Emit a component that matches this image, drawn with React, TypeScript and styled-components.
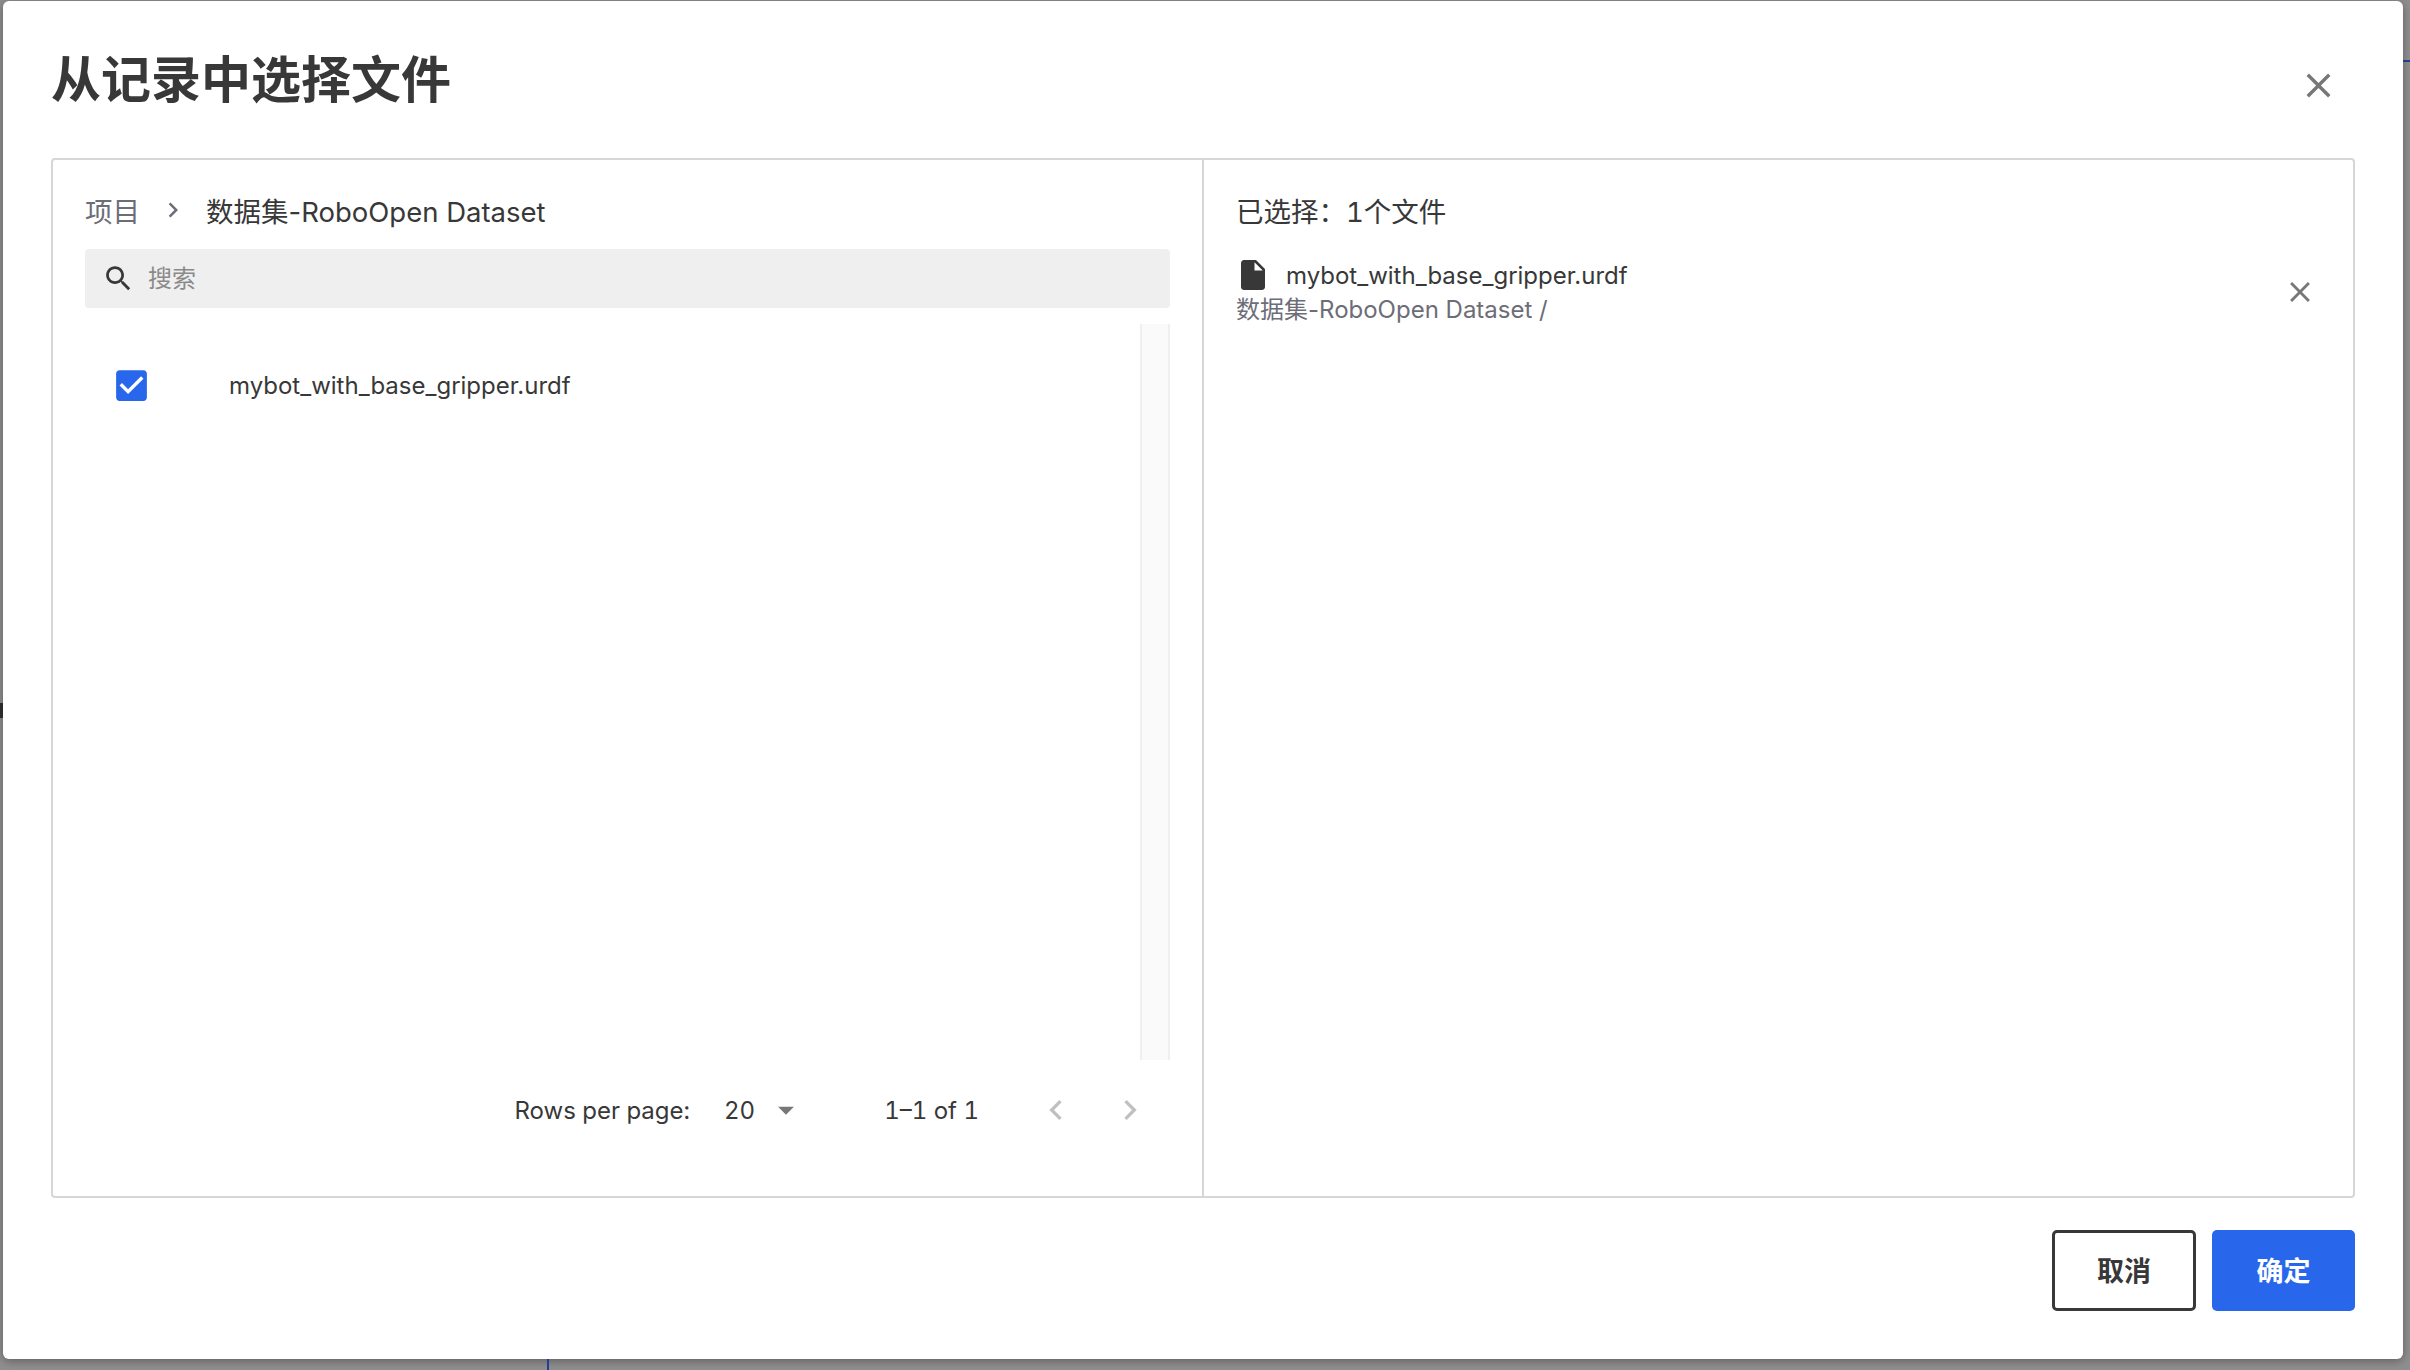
import React from "react";
import styled, { createGlobalStyle } from "styled-components";

const GlobalStyle = createGlobalStyle`
  html, body {
    margin: 0;
    padding: 0;
    background: #8f8f8f;
  }
  body {
    font-family: Inter, "Noto Sans CJK SC", sans-serif;
    color: #383838;
  }
`;

const Backdrop = styled.div`
  position: relative;
  box-sizing: border-box;
  width: 2410px;
  height: 1370px;
  padding: 1px 7px 11px 3px;
  background: #8f8f8f;
  overflow: hidden;
`;
const BehindLine = styled.div`
  position: absolute;
  background: #1f3f94;
`;
const TopRightLine = styled(BehindLine)`
  right: 0;
  top: 60px;
  width: 7px;
  height: 2px;
`;
const BottomLine = styled(BehindLine)`
  left: 547px;
  bottom: 0;
  width: 2px;
  height: 11px;
`;
const LeftGlyph = styled.div`
  position: absolute;
  left: 0;
  top: 703px;
  width: 3px;
  height: 15px;
  background: #2a2a2a;
`;
const Modal = styled.div`
  display: flex;
  flex-direction: column;
  box-sizing: border-box;
  height: 1358px;
  padding: 0 48px;
  background: #fff;
  border-radius: 6px;
  box-shadow: 0 2px 10px rgba(0, 0, 0, 0.35);
`;
const Header = styled.div`
  display: flex;
  align-items: center;
  justify-content: space-between;
  height: 157px;
  flex-shrink: 0;
`;
const Title = styled.h1`
  margin: 0;
  font-size: 50px;
  font-weight: 700;
  line-height: 60px;
  color: #383838;
`;
const IconButton = styled.button<{ $size: number; $color?: string }>`
  display: flex;
  flex-shrink: 0;
  padding: 0;
  border: 0;
  background: none;
  color: ${props => props.$color || "#777"};
  cursor: pointer;
  svg {
    display: block;
    width: ${props => props.$size}px;
    height: ${props => props.$size}px;
    fill: currentColor;
  }
`;
const HeaderClose = styled(IconButton)`
  margin: 11px 16px 0 0;
`;
const Panel = styled.div`
  display: grid;
  grid-template-columns: 1149px 1fr;
  box-sizing: border-box;
  height: 1040px;
  flex-shrink: 0;
  border: 2px solid #d6d6d6;
  border-radius: 4px;
`;
const LeftPane = styled.div`
  display: flex;
  flex-direction: column;
  min-width: 0;
  padding: 35px 32px 0;
`;
const RightPane = styled.div`
  min-width: 0;
  padding: 35px 36px 0 32px;
  border-left: 2px solid #d6d6d6;
`;
const Breadcrumb = styled.div`
  display: flex;
  align-items: center;
  height: 30px;
  font-size: 27.5px;
  color: #383838;
`;
const CrumbRoot = styled.span`
  color: #6d6d78;
`;
const CrumbSep = styled.span`
  display: flex;
  margin: 0 18px 0 18px;
  color: #6d6d78;
  svg {
    width: 30px;
    height: 30px;
    fill: currentColor;
  }
`;
const Search = styled.div`
  display: flex;
  align-items: center;
  height: 59px;
  margin-top: 24px;
  padding-left: 17px;
  background: #efefef;
  border-radius: 4px;
  svg {
    width: 33px;
    height: 33px;
    fill: #383838;
  }
`;
const SearchInput = styled.input`
  flex: 1;
  margin-left: 11px;
  border: 0;
  outline: 0;
  background: none;
  font: inherit;
  font-size: 24px;
  color: #383838;
  &::placeholder {
    color: #8a8a8a;
    opacity: 1;
  }
`;
const ListArea = styled.div`
  display: flex;
  height: 736px;
  margin-top: 16px;
`;
const List = styled.div`
  flex: 1;
  padding: 38px 0 0 26px;
`;
const Row = styled.div`
  display: flex;
  align-items: center;
  height: 46px;
  font-size: 24px;
`;
const Check = styled.span`
  display: flex;
  svg {
    display: block;
    width: 41px;
    height: 41px;
    fill: #2866ec;
  }
`;
const FileName = styled.span`
  margin-left: 77px;
`;
const ScrollTrack = styled.div`
  box-sizing: border-box;
  width: 30px;
  background: #fafafa;
  border-left: 2px solid #efefef;
  border-right: 2px solid #efefef;
`;
const Pagination = styled.div`
  display: flex;
  align-items: center;
  justify-content: flex-end;
  height: 100px;
  padding-right: 20px;
  font-size: 24px;
  font-variant-numeric: tabular-nums;
  color: #383838;
`;
const PageSize = styled.span`
  margin-left: 34px;
`;
const SizeArrow = styled.span`
  display: flex;
  margin-left: 12px;
  svg {
    width: 38px;
    height: 38px;
    fill: #777;
  }
`;
const PageRange = styled.span`
  margin-left: 79px;
`;
const PageButton = styled.span<{ $gap: number }>`
  display: flex;
  margin-left: ${props => props.$gap}px;
  svg {
    width: 40px;
    height: 40px;
    fill: #c0c0c0;
  }
`;
const SelectedTitle = styled.div`
  display: flex;
  align-items: center;
  height: 30px;
  font-size: 27.5px;
  font-variant-numeric: tabular-nums;
`;
const SelectedItem = styled.div`
  display: flex;
  align-items: center;
  justify-content: space-between;
  margin-top: 32px;
`;
const ItemName = styled.div`
  display: flex;
  align-items: center;
  height: 36px;
  font-size: 24px;
  svg {
    width: 36px;
    height: 36px;
    margin: 0 15px 0 -1px;
    fill: #383838;
  }
`;
const ItemPath = styled.div`
  height: 34px;
  font-size: 24px;
  line-height: 34px;
  color: #6d6d78;
`;
const Footer = styled.div`
  display: flex;
  justify-content: flex-end;
  gap: 16px;
  margin-top: 32px;
`;
const Button = styled.button<{ $primary?: boolean }>`
  box-sizing: border-box;
  width: ${props => (props.$primary ? 143 : 144)}px;
  height: 81px;
  padding: 0 0 3px;
  border: ${props => (props.$primary ? "0" : "3px solid #383838")};
  border-radius: 5px;
  background: ${props => (props.$primary ? "#2866ec" : "#fff")};
  color: ${props => (props.$primary ? "#fff" : "#383838")};
  font: inherit;
  font-size: 27px;
  font-weight: 700;
  cursor: pointer;
`;

const closePath =
  "M19 6.41L17.59 5 12 10.59 6.41 5 5 6.41 10.59 12 5 17.59 6.41 19 12 13.41 17.59 19 19 17.59 13.41 12z";
const chevronRight = "M10 6L8.59 7.41 13.17 12l-4.58 4.59L10 18l6-6z";
const chevronLeft = "M15.41 7.41L14 6l-6 6 6 6 1.41-1.41L10.83 12z";

const Icon = ({ d }: { d: string }) => (
  <svg viewBox="0 0 24 24">
    <path d={d} />
  </svg>
);

export default function App() {
  return (
    <>
      <GlobalStyle />
      <Backdrop>
        <TopRightLine />
        <BottomLine />
        <LeftGlyph />
        <Modal>
          <Header>
            <Title>从记录中选择文件</Title>
            <HeaderClose $size={41}>
              <Icon d={closePath} />
            </HeaderClose>
          </Header>
          <Panel>
            <LeftPane>
              <Breadcrumb>
                <CrumbRoot>项目</CrumbRoot>
                <CrumbSep>
                  <Icon d={chevronRight} />
                </CrumbSep>
                <span>数据集-RoboOpen Dataset</span>
              </Breadcrumb>
              <Search>
                <Icon d="M15.5 14h-.79l-.28-.27C15.41 12.59 16 11.11 16 9.5 16 5.91 13.09 3 9.5 3S3 5.91 3 9.5 5.91 16 9.5 16c1.61 0 3.09-.59 4.23-1.57l.27.28v.79l5 4.99L20.49 19l-4.99-5zm-6 0C7.01 14 5 11.99 5 9.5S7.01 5 9.5 5 14 7.01 14 9.5 11.99 14 9.5 14z" />
                <SearchInput placeholder="搜索" />
              </Search>
              <ListArea>
                <List>
                  <Row>
                    <Check>
                      <Icon d="M19 3H5c-1.11 0-2 .9-2 2v14c0 1.1.89 2 2 2h14c1.11 0 2-.9 2-2V5c0-1.1-.89-2-2-2zm-9 14l-5-5 1.41-1.41L10 14.17l7.59-7.59L19 8l-9 9z" />
                    </Check>
                    <FileName>mybot_with_base_gripper.urdf</FileName>
                  </Row>
                </List>
                <ScrollTrack />
              </ListArea>
              <Pagination>
                <span>Rows per page:</span>
                <PageSize>20</PageSize>
                <SizeArrow>
                  <Icon d="M7 10l5 5 5-5z" />
                </SizeArrow>
                <PageRange>1–1 of 1</PageRange>
                <PageButton $gap={57}>
                  <Icon d={chevronLeft} />
                </PageButton>
                <PageButton $gap={34}>
                  <Icon d={chevronRight} />
                </PageButton>
              </Pagination>
            </LeftPane>
            <RightPane>
              <SelectedTitle>已选择：1个文件</SelectedTitle>
              <SelectedItem>
                <div>
                  <ItemName>
                    <Icon d="M6 2c-1.1 0-1.99.9-1.99 2L4 20c0 1.1.89 2 1.99 2H18c1.1 0 2-.9 2-2V8l-6-6H6zm7 7V3.5L18.5 9H13z" />
                    mybot_with_base_gripper.urdf
                  </ItemName>
                  <ItemPath>数据集-RoboOpen Dataset /</ItemPath>
                </div>
                <IconButton $size={34}>
                  <Icon d={closePath} />
                </IconButton>
              </SelectedItem>
            </RightPane>
          </Panel>
          <Footer>
            <Button>取消</Button>
            <Button $primary>确定</Button>
          </Footer>
        </Modal>
      </Backdrop>
    </>
  );
}
